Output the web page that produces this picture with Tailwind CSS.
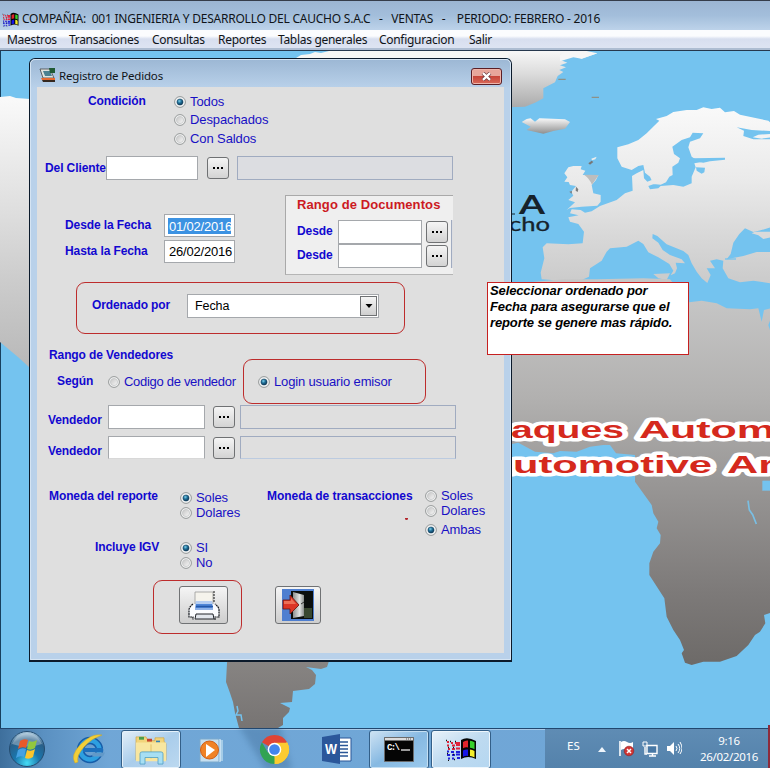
<!DOCTYPE html>
<html lang="es">
<head>
<meta charset="utf-8">
<title>Registro de Pedidos</title>
<script src="https://cdn.jsdelivr.net/npm/@tailwindcss/browser@4"></script>
</head>
<body class="w-[771px] h-[769px] overflow-hidden bg-white">
<svg width="0" height="0" class="absolute">
  <defs>
    <radialGradient id="dot" cx=".4" cy=".35" r=".7"><stop offset="0" stop-color="#7fd0ea"/><stop offset=".45" stop-color="#1f6f98"/><stop offset="1" stop-color="#0b2f4c"/></radialGradient>
    <linearGradient id="ring" x1="0" y1="0" x2="1" y2="1"><stop offset="0" stop-color="#c4c4c4"/><stop offset="1" stop-color="#f8f8f8"/></linearGradient>
    <symbol id="off" viewBox="0 0 12 12"><circle cx="6" cy="6" r="5.4" fill="#f4f4f4" stroke="#8b8e90" stroke-width=".9"/><circle cx="6" cy="6" r="3.6" fill="url(#ring)" stroke="#c2c4c6" stroke-width=".7"/></symbol>
    <symbol id="on" viewBox="0 0 12 12"><circle cx="6" cy="6" r="5.4" fill="#f1f3f4" stroke="#8b8e90" stroke-width=".9"/><circle cx="6" cy="6" r="3.1" fill="url(#dot)" stroke="#17405c" stroke-width=".5"/></symbol>
    <symbol id="winflag" viewBox="0 0 32 24">
      <path d="M16 3q6-4 15 1v18q-8-4-15 0z" fill="#050505"/>
      <path d="M18 5q2.500-2 5-1.500v7q-2.500-.5-5 .8z" fill="#e0242c"/><path d="M25 3.800q2.500.2 4.500 1.400v7q-2-1.200-4.500-1.500z" fill="#37d02c"/>
      <path d="M18 13.500q2.500-1.500 5-1v6.500q-2.500-.5-5 .8z" fill="#1616e8"/><path d="M25 12.500q2.500.2 4.500 1.400v6.600q-2-1.200-4.500-1.500z" fill="#f4ee2a"/>
      <g stroke-width="2.200" fill="none"><path d="M2 5h2m2 1h2m2 0h5M2 8.500h2m3 0h3m1-.5h4M3 12h2m2 0h3m1-.5h4" stroke="#e0243c"/><path d="M2 14.500h2m2 .5h3m2 0h4M2 18h3m2 0h3m1-.5h4M3 21.500h2m2 0h2m3-.5h3" stroke="#2020d8"/><path d="M1 3.500h1m3 1h1m4 0h1m-8 6h1m4 0h1m-7 6h1m5 1h1m-6 6h1m5-1h1" stroke="#111" stroke-width="1.300"/></g>
    </symbol>
  </defs>
</svg>
<div class="relative flex h-[768px] w-[770px] flex-col overflow-hidden font-['Liberation_Sans',Arial,sans-serif]">
  <!-- Application title bar -->
  <header class="flex h-[30px] shrink-0 items-center border-t border-[#353c4a] bg-linear-to-b from-[#9cb5d3] via-[#a3bedb] to-[#bdd3ea] pl-[2px] pt-[7px] font-['Noto_Sans','Open_Sans',sans-serif] text-[12px] text-[#101418]">
    <svg class="h-[15px] w-[17px]" viewBox="0 0 32 24" preserveAspectRatio="none"><use href="#winflag"/></svg>
    <span class="ml-[3px] whitespace-pre tracking-[-0.23px]">COMPAÑIA:  001 INGENIERIA Y DESARROLLO DEL CAUCHO S.A.C   -   VENTAS   -    PERIODO: FEBRERO - 2016</span>
  </header>
  <nav class="flex h-[21px] shrink-0 items-center border-b border-[#26384e] bg-linear-to-b from-[#fbfcfe] from-30% via-[#d8dfef] via-45% to-[#dfe5f3] font-['Noto_Sans','Open_Sans',sans-serif] text-[12px] tracking-[-0.3px] whitespace-nowrap text-[#101418] shadow-[inset_0_-2px_0_#aebdd2]">
    <span class="ml-[7px] w-[62px]">Maestros</span><span class="w-[83px]">Transaciones</span><span class="w-[66px]">Consultas</span><span class="w-[60px]">Reportes</span><span class="w-[101px]">Tablas generales</span><span class="w-[90px]">Configuracion</span><span>Salir</span>
  </nav>

  <main class="relative h-[677px] shrink-0 border-l border-[#17405e] bg-[#74c3ef]">
    <!-- World map wallpaper -->
    <svg class="absolute top-0 -left-px h-[677px] w-[770px]" viewBox="0 51 770 677">
      <defs>
        <linearGradient id="land" gradientUnits="userSpaceOnUse" x1="0" y1="100" x2="0" y2="665"><stop offset="0" stop-color="#f9f9f9"/><stop offset=".2" stop-color="#dedede"/><stop offset=".32" stop-color="#cccccc"/><stop offset=".46" stop-color="#bababa"/><stop offset=".67" stop-color="#9b9998"/><stop offset=".83" stop-color="#838180"/><stop offset="1" stop-color="#6f6c6a"/></linearGradient>
        <linearGradient id="north" gradientUnits="userSpaceOnUse" x1="0" y1="150" x2="0" y2="750"><stop offset="0" stop-color="#fbfbfb"/><stop offset=".4" stop-color="#eaeaea"/><stop offset=".68" stop-color="#d8d8d8"/><stop offset="1" stop-color="#c6c6c6"/></linearGradient>
        <linearGradient id="south" gradientUnits="userSpaceOnUse" x1="0" y1="-160" x2="0" y2="945"><stop offset="0" stop-color="#c6c6c6"/><stop offset=".27" stop-color="#b2b1b0"/><stop offset=".5" stop-color="#999796"/><stop offset=".8" stop-color="#7d7a79"/><stop offset="1" stop-color="#6d6a68"/></linearGradient>
        <linearGradient id="green" gradientUnits="userSpaceOnUse" x1="0" y1="0" x2="0" y2="175"><stop offset="0" stop-color="#f8f8f8"/><stop offset=".4" stop-color="#dcdcdc"/><stop offset="1" stop-color="#a9a9a9"/></linearGradient>
        <linearGradient id="ice" x1="0" y1="0" x2="0" y2="1"><stop offset="0" stop-color="#f8f8f8"/><stop offset="1" stop-color="#8f8f8f"/></linearGradient>
        <linearGradient id="sa" gradientUnits="userSpaceOnUse" x1="0" y1="640" x2="0" y2="728"><stop offset="0" stop-color="#8c8987"/><stop offset="1" stop-color="#777473"/></linearGradient>
      </defs>
      <path d="M0 97l10-1 6 2 14 1v269l-12-11-18-15z" fill="url(#land)"/>
      <path d="M296 58l5-3 9-1 5-2 6 1 8-2h190v7z" fill="#f6f6f4"/>
      <g transform="translate(510 50) scale(.33333)">
        <path d="M-5 172L45 170 75 158 100 145 100 115 135 97 143 78 160 66 148 60 168 52 150 46 172 38 152 30 150 22 180 14 215 26 262 10 230 3H-5z" fill="url(#green)"/>
        <path d="M165 3L262 10 215 26 190 22 150 34 150 16z" fill="#f6f6f6"/><path d="M145 88h22M245 142h22" stroke="#8d9188" stroke-width="4"/>
        <path d="M35 216L50 207 62 205 75 215 88 205 165 208 180 216 165 236 130 243 100 251 50 240 62 230z" fill="url(#ice)"/>
        <!-- Eurasia -->
        <path d="M322 292L355 283 385 270 410 250 432 228 448 212 438 207 470 198 490 186 530 180 560 180 580 172 605 177 630 173 645 187 672 183 690 194 740 205 775 212 783 220V700L730 692 690 697 655 685 638 655 640 632 620 628 600 632 615 655 590 655 602 675 592 699 575 685 560 665 545 640 535 615 520 603 470 583 442 558 428 552 427 565 445 578 458 600 480 615 515 628 525 640 497 638 501 655 495 670 482 676 490 662 478 642 445 622 415 607 400 582 385 572 350 590 300 595 290 605 275 632 240 655 237 680 200 697 140 697 125 690 95 688 92 668 103 625 98 592 110 580 175 583 218 580 222 545 205 522 180 515 175 502 206 496 180 490 185 478 212 480 225 488 245 484 270 468 320 450 345 430 368 422 366 378 380 370 400 360 402 385 412 395 425 390 432 402 415 408 420 418 445 415 452 408 490 405 520 410 545 400 545 380 557 352 553 340 580 335 560 330 545 320 535 292 540 275 570 265 580 250 548 248 540 262 515 270 487 290 492 312 510 325 505 338 487 350 488 375 478 380 468 397 452 404 430 402 420 380 405 368 400 345 385 348 365 360 335 350 322 325z" fill="url(#north)"/>
        <path d="M550 325L645 323 645 329 600 334 580 338 555 334zM558 352L585 353 583 367 575 371 560 362z" fill="#74c3ef"/>
        <path d="M680 232L725 240 783 243V268L730 268 700 258 702 242z" fill="#74c3ef"/><path d="M783 252L745 254 728 262 755 266 783 262z" fill="#f3f3f3"/>
        <path d="M662 612L670 578 688 552 705 535 730 546 752 541 783 532V606L740 606 700 618 650 628z" fill="#74c3ef"/><path d="M783 545L735 545 725 550 745 556 760 567 783 562z" fill="#dadada"/>
        <path d="M645 627L678 627" stroke="#74c3ef" stroke-width="4"/>
        <path d="M430 672L480 670 470 690 445 685z" fill="#ccc"/>
        <!-- British Isles -->
        <path d="M163 370L175 352 190 348 215 348 212 358 226 362 218 375 265 375 258 390 245 405 250 430 272 435 272 455 262 467 215 470 180 474 170 480 195 457 175 450 190 437 184 425 198 408 180 405 176 396 163 395 172 382z" fill="url(#north)"/>
        <path d="M222 374L266 375 246 404Q238 385 222 374z" fill="#bdbdbd"/><path d="M198 410l7 8-2 8-6-4zM178 425l8-2-1 8z" fill="#7c7c7c"/><path d="M235 340l10-8 5 4-10 8z" fill="#777"/><path d="M244 326l16-6-4 8-10 3z" fill="#eee"/>
      </g>
      <!-- Africa -->
      <g transform="translate(510 350) scale(.33333)">
        <path d="M-10 285L-10-195 75-205 160-212 260-212 400-215 480-212 537-143 575-148 620-140 650-125 720-122 745-125 755-85 762-120 783-125V788L762 795 766 820 750 845 735 855 715 885 680 918 630 935 580 935 545 945 525 938 515 910 522 900 510 870 490 840 470 800 463 745 418 675 418 640 430 605 450 580 452 555 440 535 445 515 430 490 425 465 375 395 375 315 318 310 300 285 280 285 240 290 200 305 150 303 130 310 75 305 50 292 25 278z" fill="url(#south)"/>
        <path d="M757 392h26v30h-26z" fill="#74c3ef"/><path d="M775-75l8-20v45z" fill="#74c3ef"/><path d="M714 452l4 28 10 14 11 28" fill="none" stroke="#79bfe4" stroke-width="5"/>
      </g>
      <!-- South America -->
      <path d="M228 655L227 663 226 682 230 693 233 702 235 713 239 728H278L283 725 283 718 289 712 290 708 280 703 292 702 293 691 309 689 315 684 316 675 312 670 306 667 321 669 327 667 331 655z" fill="url(#sa)"/><path d="M237 706l1 5-2 4 5 0 1 6" fill="none" stroke="#74c3ef" stroke-width="1.500"/>
      <text x="519" y="214" font-family="Lato" font-weight="700" font-size="26" textLength="26" lengthAdjust="spacingAndGlyphs" fill="#16222b">A</text><path d="M511 214h4" stroke="#16222b"/>
      <text x="509" y="231" font-family="Lato" font-weight="400" font-size="19" textLength="41" lengthAdjust="spacingAndGlyphs" fill="#16222b" stroke="#16222b" stroke-width=".3">cho</text>
      <g font-family="Liberation Sans" font-weight="700" font-size="24" fill="#d5291d" stroke="#fff" stroke-width="7" stroke-linejoin="round" paint-order="stroke">
        <text x="511" y="438" textLength="113" lengthAdjust="spacingAndGlyphs">aques</text><text x="639" y="438" textLength="136" lengthAdjust="spacingAndGlyphs">Autom</text>
        <text x="483" y="473" textLength="229" lengthAdjust="spacingAndGlyphs">Automotive</text><text x="727" y="473" textLength="48" lengthAdjust="spacingAndGlyphs">Ar</text>
      </g>
    </svg>

    <!-- Dialog window -->
    <section class="absolute top-[7px] left-[28px] h-[604px] w-[483px] rounded-t-[6px] border border-b-2 border-[#0b1a2b] bg-[#b9d1ea]">
      <div class="flex h-full flex-col rounded-t-[5px] border border-[#d5e4f3] bg-linear-to-b from-[#9db8d5] to-[#b9d1ea] to-[28px] px-[6px] pb-[6px]">
        <div class="flex h-[27px] shrink-0 items-center">
          <svg class="mt-[3px] ml-[2px] h-[16px] w-[17px]" viewBox="0 0 17 16"><path d="M1 2h10l4 9H4z" fill="#dfe3e0" stroke="#444" stroke-width=".8"/><path d="M4 4h7l2 5H6z" fill="#4c8191"/><path d="M10 1h6v5h-5z" fill="#205a34"/><path d="M2 11h14v2H3z" fill="#e66a30"/><path d="M3 13h13v2H4z" fill="#35281f"/></svg>
          <span class="mt-[5px] ml-[3px] font-['Noto_Sans','Open_Sans',sans-serif] text-[11.500px] tracking-[-0.18px] whitespace-nowrap text-[#101418]">Registro de Pedidos</span>
          <button class="mt-[5px] mr-[2px] ml-auto flex h-[17px] w-[31px] items-center justify-center rounded-[3px] border border-[#5b1f26] bg-linear-to-b from-[#e7a69b] from-45% via-[#c7463a] via-50% to-[#d9695a] shadow-[inset_0_0_0_1px_#efb5ab]" aria-label="Cerrar">
            <svg class="h-[9px] w-[11px]" viewBox="0 0 11 9"><path d="M2 1.200l7 6.600M9 1.200L2 7.800" stroke="#6a3a40" stroke-width="3.800"/><path d="M2 1.200l7 6.600M9 1.200L2 7.800" stroke="#fff" stroke-width="2.300"/></svg>
          </button>
        </div>
        <form class="flex min-h-0 grow flex-col bg-[#dfdfdf] pl-px text-[13px] leading-[18px] tracking-[-0.1px] whitespace-nowrap text-[#1810c4]">
          <!-- Condición -->
          <div class="flex h-[69px] shrink-0 pt-[5px] pl-[50px]">
            <b class="w-[86px] text-[12px] text-[#1208d0]">Condición</b>
            <div class="flex flex-col">
              <label class="flex h-[19px] items-center"><svg class="mr-[4px] size-[12px]"><use href="#on"/></svg>Todos</label>
              <label class="flex h-[18px] items-center"><svg class="mr-[4px] size-[12px]"><use href="#off"/></svg>Despachados</label>
              <label class="flex h-[19px] items-center"><svg class="mr-[4px] size-[12px]"><use href="#off"/></svg>Con Saldos</label>
            </div>
          </div>
          <!-- Cliente -->
          <div class="flex h-[24px] shrink-0 items-center pl-[7px]">
            <b class="w-[61px] pb-px text-[12px] text-[#1208d0]">Del Cliente</b>
            <span class="h-[24px] w-[92px] border border-[#a5a8ac] bg-white"></span>
            <span class="ml-[9px] flex h-[22px] w-[22px] items-center justify-center gap-[2px] rounded-[3px] border border-[#6f7173] bg-linear-to-b from-[#f5f5f5] to-[#d3d3d3]"><i class="size-[2px] bg-black"></i><i class="size-[2px] bg-black"></i><i class="size-[2px] bg-black"></i></span>
            <span class="ml-[8px] h-[24px] w-[216px] border border-[#a0abc0] bg-[#dcdde1]"></span>
          </div>
          <!-- Fechas y documentos -->
          <div class="flex h-[102px] shrink-0 pl-[27px]">
            <div class="flex w-[220px] flex-col gap-[3px] pt-[34px]">
              <div class="flex h-[23px] items-center"><b class="w-[99px] pb-[2px] text-[12px] text-[#1208d0]">Desde la Fecha</b><span class="flex h-[23px] w-[71px] items-center border border-[#a5a8ac] bg-white pl-[3px]"><span class="h-[16px] w-[63px] bg-[#3c92e2] pl-px leading-[17px] tracking-[-0.2px] text-white">01/02/2016</span></span></div>
              <div class="flex h-[23px] items-center"><b class="w-[99px] pb-[2px] text-[12px] text-[#1208d0]">Hasta la Fecha</b><span class="flex h-[23px] w-[71px] items-center border border-[#a5a8ac] bg-white pl-[4px] tracking-[-0.2px] text-black">26/02/2016</span></div>
            </div>
            <div class="mt-[15px] h-[80px] w-[168px] border-y border-l border-[#a9a9a9] border-b-[#b5b5b5] bg-[#efefef] pl-[11px]">
              <b class="block h-[24px] text-[13px] tracking-[0.1px] text-[#cc1a22]">Rango de Documentos</b>
              <div class="flex h-[24px] items-center"><b class="w-[41px] pb-[2px] text-[12px] text-[#1208d0]">Desde</b><span class="h-[24px] w-[84px] border border-[#a5a8ac] bg-white"></span><span class="ml-[4px] flex h-[22px] w-[22px] items-center justify-center gap-[2px] rounded-[3px] border border-[#6f7173] bg-linear-to-b from-[#f5f5f5] to-[#d3d3d3]"><i class="size-[2px] bg-black"></i><i class="size-[2px] bg-black"></i><i class="size-[2px] bg-black"></i></span><span class="ml-[3px] h-[24px] w-[2px] border-l border-[#a0abc0] bg-[#dcdde1]"></span></div>
              <div class="flex h-[24px] items-center"><b class="w-[41px] pb-[2px] text-[12px] text-[#1208d0]">Desde</b><span class="h-[24px] w-[84px] border border-[#a5a8ac] bg-white"></span><span class="ml-[4px] flex h-[22px] w-[22px] items-center justify-center gap-[2px] rounded-[3px] border border-[#6f7173] bg-linear-to-b from-[#f5f5f5] to-[#d3d3d3]"><i class="size-[2px] bg-black"></i><i class="size-[2px] bg-black"></i><i class="size-[2px] bg-black"></i></span><span class="ml-[3px] h-[24px] w-[2px] border-l border-[#a0abc0] bg-[#dcdde1]"></span></div>
            </div>
          </div>
          <!-- Ordenado por -->
          <div class="ml-[38px] flex h-[52px] w-[329px] shrink-0 items-center rounded-[9px] border border-[#bd2c2c] pb-[5px] pl-[15px]">
            <b class="w-[95px] pb-[2px] text-[12px] text-[#1208d0]">Ordenado por</b>
            <span class="flex h-[24px] w-[192px] items-center justify-between border border-[#a5a8ac] bg-white pr-px pl-[7px] text-[12.500px] text-black">Fecha<span class="flex h-[20px] w-[17px] items-center justify-center border border-[#6f7173] bg-linear-to-b from-[#f5f5f5] to-[#cfcfcf]"><svg class="h-[4px] w-[8px]" viewBox="0 0 8 4"><path d="M.5 0h7L4 4z"/></svg></span></span>
          </div>
          <!-- Vendedores -->
          <b class="mt-[12px] ml-[11px] h-[13px] shrink-0 text-[12px] text-[#1208d0]">Rango de Vendedores</b>
          <div class="flex h-[45px] shrink-0 items-center pl-[19px]">
            <b class="w-[51px] pb-[2px] text-[12px] text-[#1208d0]">Según</b>
            <label class="flex w-[135px] items-center tracking-[-0.3px]"><svg class="mr-[4px] size-[12px]"><use href="#off"/></svg>Codigo de vendedor</label>
            <label class="flex h-[45px] w-[183px] items-center rounded-[9px] border border-[#bd2c2c] pl-[14px] tracking-[-0.15px]"><svg class="mr-[4px] size-[12px]"><use href="#on"/></svg>Login usuario emisor</label>
          </div>
          <div class="mt-px flex h-[24px] shrink-0 items-center pl-[10px]">
            <b class="w-[60px] pt-[5px] text-[12px] text-[#1208d0]">Vendedor</b><span class="h-[24px] w-[97px] border border-[#a5a8ac] bg-white"></span><span class="ml-[8px] flex h-[22px] w-[22px] items-center justify-center gap-[2px] rounded-[3px] border border-[#6f7173] bg-linear-to-b from-[#f5f5f5] to-[#d3d3d3]"><i class="size-[2px] bg-black"></i><i class="size-[2px] bg-black"></i><i class="size-[2px] bg-black"></i></span><span class="ml-[5px] h-[24px] w-[216px] border border-[#a0abc0]"></span>
          </div>
          <div class="mt-[7px] flex h-[23px] shrink-0 items-center pl-[10px]">
            <b class="w-[60px] pt-[6px] text-[12px] text-[#1208d0]">Vendedor</b><span class="h-[23px] w-[97px] border border-[#a5a8ac] border-b-[#d8d8d8] bg-white"></span><span class="ml-[8px] flex h-[22px] w-[22px] items-center justify-center gap-[2px] rounded-[3px] border border-[#6f7173] bg-linear-to-b from-[#f5f5f5] to-[#d3d3d3]"><i class="size-[2px] bg-black"></i><i class="size-[2px] bg-black"></i><i class="size-[2px] bg-black"></i></span><span class="ml-[5px] h-[23px] w-[216px] border border-[#a0abc0] border-b-[#bccbe0]"></span>
          </div>
          <!-- Moneda -->
          <div class="mt-[28px] flex h-[51px] shrink-0 pl-[11px]">
            <b class="w-[131px] text-[12px] text-[#1208d0]">Moneda del reporte</b>
            <div class="flex w-[87px] flex-col pt-[3px]">
              <label class="flex h-[15px] items-center"><svg class="mr-[4px] size-[12px]"><use href="#on"/></svg>Soles</label>
              <label class="flex h-[15px] items-center"><svg class="mr-[4px] size-[12px]"><use href="#off"/></svg>Dolares</label>
            </div>
            <div class="w-[158px]"><b class="block text-[12px] tracking-[-0.05px] text-[#1208d0]">Moneda de transacciones</b><i class="mt-[13px] ml-[138px] block h-[2px] w-[3px] rounded-b bg-[#b3262c]"></i></div>
            <div class="flex flex-col pt-px">
              <label class="flex h-[15px] items-center"><svg class="mr-[4px] size-[12px]"><use href="#off"/></svg>Soles</label>
              <label class="flex h-[15px] items-center"><svg class="mr-[4px] size-[12px]"><use href="#off"/></svg>Dolares</label>
              <label class="mt-[4px] flex h-[15px] items-center"><svg class="mr-[4px] size-[12px]"><use href="#on"/></svg>Ambas</label>
            </div>
          </div>
          <div class="flex h-[42px] shrink-0 pl-[57px]">
            <b class="w-[85px] text-[12px] text-[#1208d0]">Incluye IGV</b>
            <div class="flex flex-col pt-[2px]">
              <label class="flex h-[15px] items-center"><svg class="mr-[4px] size-[12px]"><use href="#on"/></svg>SI</label>
              <label class="flex h-[15px] items-center"><svg class="mr-[4px] size-[12px]"><use href="#off"/></svg>No</label>
            </div>
          </div>
          <!-- Acciones -->
          <div class="flex h-[54px] shrink-0 pl-[115px]">
            <div class="h-[54px] w-[89px] rounded-[9px] border border-[#bd2c2c] pt-[5px] pl-[25px]">
              <button type="button" class="flex h-[38px] w-[49px] items-center justify-center rounded-[3px] border border-[#707274] bg-linear-to-b from-[#f5f5f5] to-[#cecece]" aria-label="Imprimir">
                <svg class="h-[33px] w-[34px]" viewBox="0 0 34 33"><path d="M8 3h18v13H8z" fill="#f5f3ec" stroke="#999" stroke-width=".8"/><path d="M27 2v12" stroke="#111" stroke-dasharray="2 1"/><path d="M6 15q-4 3-4 6v7h4v2h22v-2h4v-7q0-3-4-6z" fill="#fbfcff"/><path d="M6 15q-4 3-4 6v7h4v3m22 0v-3h4v-7q0-3-4-6" fill="none" stroke="#15181e" stroke-width="1.200" stroke-dasharray="2 .6"/><path d="M9 12h16l1 9H8z" fill="#4f86d8"/><path d="M9 12h16l.3 3H8.700z" fill="#b5cdf2"/><path d="M9 17.500h17" stroke="#2457a8" stroke-width="1.500"/><path d="M8 20h18" stroke="#8fb2e8" stroke-width="2"/><path d="M9 25h17l1 5H8z" fill="#e2e6ed" stroke="#22252b"/></svg>
              </button>
            </div>
            <button type="button" class="mt-[6px] ml-[33px] flex h-[38px] w-[46px] items-center justify-center rounded-[3px] border border-[#707274] bg-linear-to-b from-[#f5f5f5] to-[#cecece]" aria-label="Salir">
              <svg class="h-[32px] w-[32px]" viewBox="0 0 32 32"><defs><linearGradient id="door"><stop offset="0" stop-color="#8e9190"/><stop offset=".6" stop-color="#e2e4e3"/><stop offset="1" stop-color="#8a8d8c"/></linearGradient></defs><path d="M0 0h32v32H0z" fill="#4f7fd0"/><path d="M9 2h22v28H9z" fill="#0b0e0d"/><path d="M22 19h8v10h-8z" fill="#38472f"/><path d="M11 3l11 3v21l-11 2z" fill="url(#door)"/><path d="M19 15l3-2" stroke="#333"/><path d="M1 11h7V6l9 10-9 9v-5H1z" fill="#dc3526" stroke="#65150f" stroke-width=".8"/><path d="M2 12h7V9l5 6H2z" fill="#ee6f56"/></svg>
            </button>
          </div>
        </form>
      </div>
    </section>
    <!-- Note over the desktop -->
    <aside class="absolute top-[231px] left-[486px] h-[73px] w-[202px] border border-[#c62020] bg-white pl-[2px] text-[13px] leading-[16px] font-bold tracking-[-0.12px] whitespace-nowrap text-black italic">Seleccionar ordenado por<br>Fecha para asegurarse que el<br>reporte se genere mas rápido.</aside>
  </main>

  <!-- Taskbar -->
  <footer class="relative flex h-[40px] shrink-0 border-t border-[#21476f] bg-[#70a6d6] shadow-[inset_0_1px_0_#b8d3ec]">
    <svg class="absolute top-0 left-[230px] h-[39px] w-[80px]" viewBox="230 729 80 39"><path d="M238 725h42l12 45h-26z" fill="#44719c" opacity=".55" class="blur-[3px]"/></svg>
    <div class="relative flex w-[545px] shrink-0 items-center bg-linear-to-r from-[#3e6f9c] via-[#588ebf]/90 via-8% to-[#70a8d8]/20 to-20% pt-px">
      <svg class="ml-[7px] size-[38px]" viewBox="0 0 38 38"><defs><radialGradient id="orb" cx=".5" cy=".9" r=".9"><stop offset="0" stop-color="#45dcf5"/><stop offset=".4" stop-color="#1a76ad"/><stop offset=".75" stop-color="#2a5f88"/><stop offset="1" stop-color="#b6d3e6"/></radialGradient></defs><circle cx="20" cy="19" r="17.500" fill="url(#orb)" stroke="#244c70"/><path d="M5 14q5-11 15-11t15 11q-15 5-30 0z" fill="#fff" opacity=".3"/><path d="M13 11q4-3 8-1l-2 8q-4-2-8 1z" fill="#e85a2a"/><path d="M22 11q4 2 8-1l-2 8q-4 3-8 1z" fill="#92c83e"/><path d="M11 20q4-3 8-1l-2 8q-4-2-8 1z" fill="#45a1e2"/><path d="M20 20q4 2 8-1l-2 8q-4 3-8 1z" fill="#fcc52c"/></svg>
      <svg class="ml-[27px] h-[34px] w-[33px]" viewBox="0 0 33 34"><circle cx="18" cy="18" r="9.500" fill="none" stroke="#165da9" stroke-width="7.500"/><circle cx="18" cy="18" r="9.500" fill="none" stroke="#2d9fe0" stroke-width="4.500"/><path d="M11 18h20" stroke="#1d70bd" stroke-width="4"/><path d="M21 20.500h12l-2 4h-11z" fill="#6299c8"/><path d="M3 31Q-2 23 9 12T30 3q-10 3-18 12T6 30z" fill="#f3cf37" stroke="#d5a91c" stroke-width=".5"/></svg>
      <div class="ml-[16px] flex h-[39px] w-[60px] items-center justify-center rounded-[3px] border border-[#335f88] bg-linear-to-br from-[#e4eff8] via-[#aacdeb] to-[#bcd9f0] shadow-[inset_0_0_0_1px_#e5f1fa]">
        <svg class="mt-[2px] h-[30px] w-[34px]" viewBox="0 0 34 32" preserveAspectRatio="none"><path d="M2 7V2h10l2 4h7V3h9v4l2 2v18H2z" fill="#f2d47b" stroke="#d0a540" stroke-width=".7"/><path d="M5 2h5v3H5z" fill="#4b9e48"/><path d="M13 4h5v3h-5z" fill="#c7452d"/><path d="M22 6h4v2h-4z" fill="#3484b6"/><path d="M2 8h30v20H2z" fill="#f8e6a0"/><path d="M17 10v15" stroke="#e3c264"/><path d="M6 31V20q0-2 2-2h19q2 0 2 2v11h-5v-7H11v7z" fill="#a7dff3" stroke="#4b9dc4" stroke-width=".8"/></svg>
      </div>
      <svg class="ml-[17px] h-[28px] w-[28px]" viewBox="0 0 28 28"><path d="M22 5l3 0v21h-3z" fill="#a4cce7"/><path d="M2 4h19v23H2z" fill="#c6dff0" stroke="#7ba9cc"/><path d="M22 4v23" stroke="#e9f4fb"/><circle cx="11.500" cy="15" r="9" fill="#f08226" stroke="#d15d14"/><path d="M8 9l9 6-9 7z" fill="#fff"/></svg>
      <svg class="ml-[33px] size-[31px]" viewBox="0 0 32 32"><path d="M16 16L3.010 8.500A15 15 0 0 1 29 8.500z" fill="#df4435"/><path d="M16 16l13-7.500A15 15 0 0 1 16 31l-2-8z" fill="#fbcb30"/><path d="M16 16v15A15 15 0 0 1 3 8.500L9 19z" fill="#31a352"/><path d="M16 9h13.300A15 15 0 0 1 16 31l6-12z" fill="#fbcb30"/><circle cx="16" cy="16" r="7" fill="#fff"/><circle cx="16" cy="16" r="5.500" fill="#4285ed"/></svg>
      <svg class="ml-[31px] h-[32px] w-[32px]" viewBox="0 0 32 32"><path d="M16 5h14v23H16z" fill="#fff" stroke="#2b5797"/><path d="M18 9h9m-9 3.500h9M18 16h9m-9 3.500h9M18 23h9" stroke="#2b5797" stroke-width="1.500"/><path d="M1 4l18-3v30L1 28z" fill="#2b579a"/><text x="4" y="21" font-family="Liberation Sans" font-weight="700" font-size="14" textLength="12" lengthAdjust="spacingAndGlyphs" fill="#fff">W</text></svg>
      <div class="ml-[16px] flex h-[39px] w-[60px] items-center justify-center rounded-[3px] border border-[#335f88] bg-linear-to-br from-[#cfe3f3] via-[#86b9e2] to-[#9bc9ec] shadow-[inset_0_0_0_1px_#c5dff2]">
        <svg class="h-[25px] w-[30px]" viewBox="0 0 30 25"><path d="M.5.5h29v24H.5z" fill="#050505" stroke="#6b6b6b"/><path d="M1 1h28v2.500H1z" fill="#dcdcdc"/><path d="M22 2h1m1 0h1m1 0h1" stroke="#555"/><text x="3" y="13" font-family="Liberation Mono" font-weight="700" font-size="9" textLength="13" fill="#fff">C:\</text><path d="M17 13h9" stroke="#fff" stroke-width="1.200"/></svg>
      </div>
      <div class="ml-[2px] flex h-[39px] w-[60px] items-center justify-center rounded-[3px] border border-[#335f88] bg-linear-to-br from-[#e8f2fa] via-[#bedaf0] to-[#b5d7f1] shadow-[inset_0_0_0_1px_#eef6fc]"><svg class="h-[24px] w-[32px]"><use href="#winflag"/></svg></div>
    </div>
    <div class="flex grow items-center bg-linear-to-b from-[#5f8cb4] to-[#5482ab] pl-[22px] font-['Noto_Sans','Open_Sans',sans-serif] text-[11.500px] text-white">
      <span class="w-[31px] pb-[5px]">ES</span>
      <svg class="mt-[2px] h-[5px] w-[8px]" viewBox="0 0 8 5"><path d="M4 0l4 5H0z" fill="#eef5fb"/></svg>
      <svg class="ml-[12px] h-[17px] w-[17px]" viewBox="0 0 17 17"><path d="M2 1v15" stroke="#fff" stroke-width="1.600"/><path d="M3 2q3-2 6 0t6 0v8q-3 2-6 0t-6 0z" fill="#fff"/><circle cx="11" cy="11" r="4.800" fill="#d13635" stroke="#8e2224" stroke-width=".6"/><path d="M9 9l4 4m0-4l-4 4" stroke="#fff" stroke-width="1.500"/></svg>
      <svg class="ml-[7px] h-[16px] w-[16px]" viewBox="0 0 16 16"><path d="M5 4.500h10v8H5z" fill="#4878a5" stroke="#fff" stroke-width="1.400"/><path d="M7 15h7M10.500 13v2M3 6v7h2" stroke="#fff" stroke-width="1.400" fill="none"/><path d="M1 1v4h4V1M2 0v2m2-2v2" stroke="#fff" fill="none"/></svg>
      <svg class="ml-[8px] h-[15px] w-[16px]" viewBox="0 0 16 15"><path d="M1 5h3l4-4v13l-4-4H1z" fill="#fff"/><path d="M10 5q2 2.500 0 5m2-7q3.500 4.500 0 9m2-11q4 6.500 0 12" stroke="#fff" fill="none"/></svg>
      <div class="ml-[14px] flex w-[66px] flex-col items-center text-[11.500px] leading-[16px] tracking-[-0.3px] whitespace-nowrap"><span>9:16</span><span>26/02/2016</span></div>
    </div>
  </footer>
  <i class="absolute right-0 bottom-0 h-[43px] w-[2px] bg-[#8d2b3b]"></i>
</div>
</body>
</html>
